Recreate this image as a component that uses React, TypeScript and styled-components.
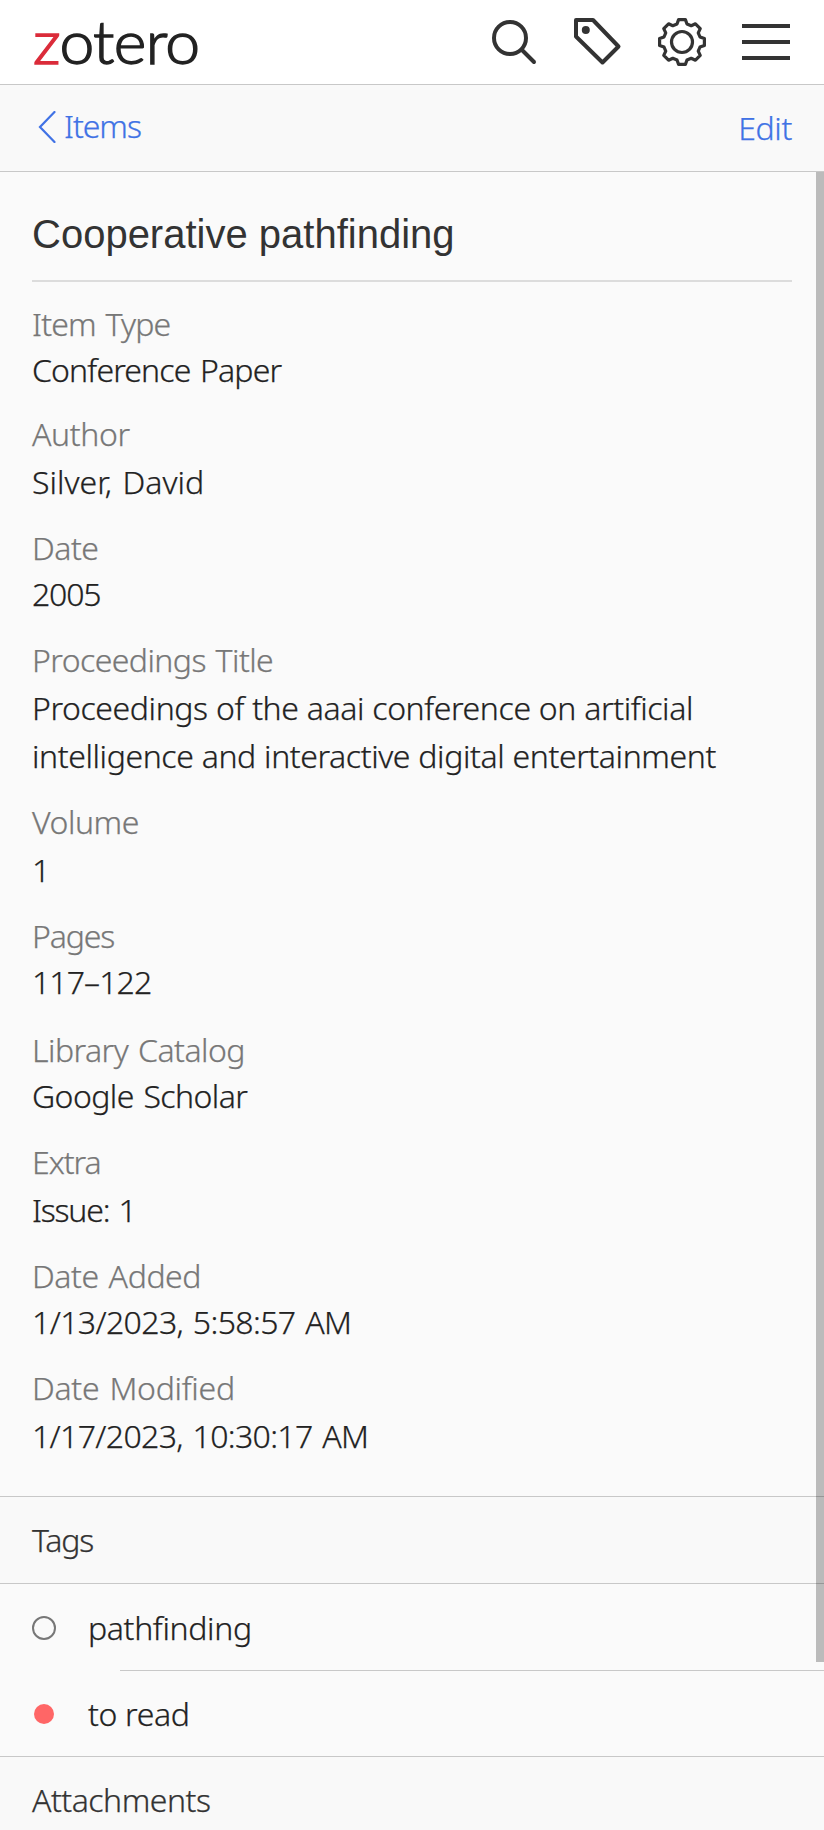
import React from "react";
import styled, { createGlobalStyle } from "styled-components";

const GlobalStyle = createGlobalStyle`
  * { box-sizing: border-box; }
  body {
    margin: 0;
    background: #fafafa;
    color: #222;
    font-family: "Noto Sans", "Open Sans", sans-serif;
    font-size: 32px;
    font-weight: 300;
    line-height: 48px;
    letter-spacing: -0.35px;
    word-spacing: 2px;
    -webkit-text-stroke: 0.25px currentColor;
  }
`;

const Page = styled.div`
  display: flex;
  flex-direction: column;
  width: 824px;
  height: 1830px;
  overflow: hidden;
`;

const Header = styled.header`
  display: flex;
  flex: none;
  justify-content: space-between;
  height: 85px;
  padding: 0 34px 0 33px;
  background: #fff;
  border-bottom: 1px solid #c8c8c8;
`;

const Logo = styled.div`
  padding-top: 5px;
  font-family: Lato, sans-serif;
  font-size: 60px;
  font-weight: 300;
  line-height: 72px;
  letter-spacing: -0.6px;
  color: #222;
  transform: scaleX(1.04);
  transform-origin: left;
  -webkit-text-stroke: 1.4px currentColor;
`;

const LogoInitial = styled.span`
  color: #db2c3a;
`;

const Tools = styled.nav`
  display: flex;
  gap: 36px;
  padding-top: 18px;
`;

const ToolIcon = styled.svg<{ $weight?: number }>`
  display: block;
  width: 48px;
  height: 48px;
  fill: none;
  stroke: #333;
  stroke-width: ${(p) => p.$weight ?? 4};
  stroke-linejoin: round;
  stroke-linecap: round;
`;

const NavBar = styled.div`
  display: flex;
  flex: none;
  align-items: center;
  justify-content: space-between;
  height: 87px;
  padding: 0 32px 0 38px;
  background: #f9f9f9;
  border-bottom: 1px solid #c8c8c8;
  color: #4072e5;
`;

const BackLink = styled.a`
  display: flex;
  align-items: center;
  gap: 8px;
  padding-bottom: 4px;
  letter-spacing: -1.05px;
`;

const Chevron = styled.svg`
  width: 18px;
  height: 32px;
  margin-top: 2px;
  fill: none;
  stroke: currentColor;
  stroke-width: 2.2;
  stroke-linecap: round;
`;

const Scroller = styled.main`
  position: relative;
  flex: 1;
  min-height: 0;
  overflow: hidden;
`;

const ScrollThumb = styled.div`
  position: absolute;
  top: 0;
  right: 0;
  width: 8px;
  height: 1490px;
  background: rgba(0, 0, 0, 0.25);
`;

const Details = styled.section`
  padding: 0 32px 36px;
`;

const Title = styled.h1`
  height: 110px;
  margin: 0 0 18px;
  padding-top: 38px;
  border-bottom: 2px solid #dcdcdc;
  font-family: "Liberation Sans", Arial, sans-serif;
  font-size: 40px;
  font-weight: 400;
  line-height: 48px;
  letter-spacing: 0;
  word-spacing: 0;
  color: #333;
  -webkit-text-stroke: 0;
`;

const Fields = styled.dl`
  margin: 0;
`;

const Field = styled.div<{ $gap: number }>`
  margin-top: ${(p) => p.$gap}px;
`;

const Label = styled.dt<{ $lead: number; $track: number }>`
  height: ${(p) => p.$lead}px;
  letter-spacing: ${(p) => p.$track}px;
  color: #777;
`;

const Value = styled.dd<{ $track: number; $wordGap?: number }>`
  margin: 0;
  letter-spacing: ${(p) => p.$track}px;
  word-spacing: ${(p) => p.$wordGap ?? 2}px;
`;

const SectionHead = styled.h2<{ $track: number }>`
  display: flex;
  align-items: center;
  height: 88px;
  margin: 0;
  padding: 0 32px;
  background: #f9f9f9;
  border: 1px solid #c8c8c8;
  border-width: 1px 0;
  font: inherit;
  letter-spacing: ${(p) => p.$track}px;
  color: #333;
`;

const TagRow = styled.div<{ $last?: boolean }>`
  display: flex;
  align-items: center;
  height: ${(p) => (p.$last ? 85 : 86)}px;
  padding: 0 0 ${(p) => (p.$last ? 2 : 0)}px 32px;
`;

const TagDot = styled.span<{ $color?: string }>`
  width: ${(p) => (p.$color ? 20 : 24)}px;
  height: ${(p) => (p.$color ? 20 : 24)}px;
  margin: 2px ${(p) => (p.$color ? 34 : 32)}px 0 ${(p) => (p.$color ? 2 : 0)}px;
  border: ${(p) => (p.$color ? "none" : "2px solid #777")};
  border-radius: 50%;
  background: ${(p) => p.$color ?? "transparent"};
`;

const TagName = styled.span`
  padding-top: 2px;
  word-spacing: 0;
`;

const TagDivider = styled.div`
  height: 1px;
  margin-left: 120px;
  background: #c8c8c8;
`;

type FieldData = {
  label: string;
  value: string;
  gap: number;
  lead: number;
  track: [label: number, value: number];
  wordGap?: number;
};

const fields: FieldData[] = [
  { label: "Item Type", value: "Conference Paper", gap: 0, lead: 46, track: [-0.8, -0.85] },
  { label: "Author", value: "Silver, David", gap: 16, lead: 48, track: [-0.35, 0.05] },
  { label: "Date", value: "2005", gap: 18, lead: 46, track: [-0.5, -1.2] },
  {
    label: "Proceedings Title",
    value: "Proceedings of the aaai conference on artificial intelligence and interactive digital entertainment",
    gap: 18,
    lead: 48,
    track: [-0.57, -0.4],
    wordGap: 0.3,
  },
  { label: "Volume", value: "1", gap: 18, lead: 48, track: [-0.45, 0] },
  { label: "Pages", value: "117–122", gap: 18, lead: 46, track: [-1.15, -0.9] },
  { label: "Library Catalog", value: "Google Scholar", gap: 20, lead: 46, track: [-0.52, -0.58] },
  { label: "Extra", value: "Issue: 1", gap: 18, lead: 48, track: [-1.05, -1.2] },
  { label: "Date Added", value: "1/13/2023, 5:58:57 AM", gap: 18, lead: 46, track: [-0.43, -0.62] },
  { label: "Date Modified", value: "1/17/2023, 10:30:17 AM", gap: 18, lead: 48, track: [-0.27, -0.65] },
];

// One gear tooth pointing up, repeated at every 45 degrees around the centre.
const tooth = [
  [-5, -18],
  [-3.4, -22.4],
  [3.4, -22.4],
  [5, -18],
];
const gearPoints = Array.from({ length: 8 }, (_, i) => {
  const a = (i * Math.PI) / 4;
  return tooth
    .map(([x, y]) => {
      const px = 24 + x * Math.cos(a) - y * Math.sin(a);
      const py = 24 + x * Math.sin(a) + y * Math.cos(a);
      return `${px.toFixed(2)},${py.toFixed(2)}`;
    })
    .join(" ");
}).join(" ");

export default function App() {
  return (
    <Page>
      <GlobalStyle />
      <Header>
        <Logo>
          <LogoInitial>z</LogoInitial>otero
        </Logo>
        <Tools>
          <ToolIcon viewBox="0 0 48 48">
            <circle cx="20" cy="20" r="16" />
            <path d="M32 32 44 44" />
          </ToolIcon>
          <ToolIcon viewBox="0 0 48 48">
            <path d="M2 2H19L44.5 28.5 28.5 44.5 2 18.5Z" />
            <circle cx="11.8" cy="12" r="4" fill="#333" stroke="none" />
          </ToolIcon>
          <ToolIcon viewBox="0 0 48 48" $weight={3.2}>
            <polygon points={gearPoints} />
            <circle cx="24" cy="24" r="10.5" />
          </ToolIcon>
          <ToolIcon viewBox="0 0 48 48">
            <path d="M0 8H48M0 24H48M0 40H48" />
          </ToolIcon>
        </Tools>
      </Header>
      <NavBar>
        <BackLink>
          <Chevron viewBox="0 0 18 32">
            <path d="M16.5 1 2 16 16.5 31" />
          </Chevron>
          Items
        </BackLink>
        <a>Edit</a>
      </NavBar>
      <Scroller>
        <Details>
          <Title>Cooperative pathfinding</Title>
          <Fields>
            {fields.map((f) => (
              <Field key={f.label} $gap={f.gap}>
                <Label $lead={f.lead} $track={f.track[0]}>
                  {f.label}
                </Label>
                <Value $track={f.track[1]} $wordGap={f.wordGap}>
                  {f.value}
                </Value>
              </Field>
            ))}
          </Fields>
        </Details>
        <SectionHead $track={-1.2}>Tags</SectionHead>
        <TagRow>
          <TagDot />
          <TagName>pathfinding</TagName>
        </TagRow>
        <TagDivider />
        <TagRow $last>
          <TagDot $color="#ff6666" />
          <TagName>to read</TagName>
        </TagRow>
        <SectionHead $track={-0.5}>Attachments</SectionHead>
        <ScrollThumb />
      </Scroller>
    </Page>
  );
}
